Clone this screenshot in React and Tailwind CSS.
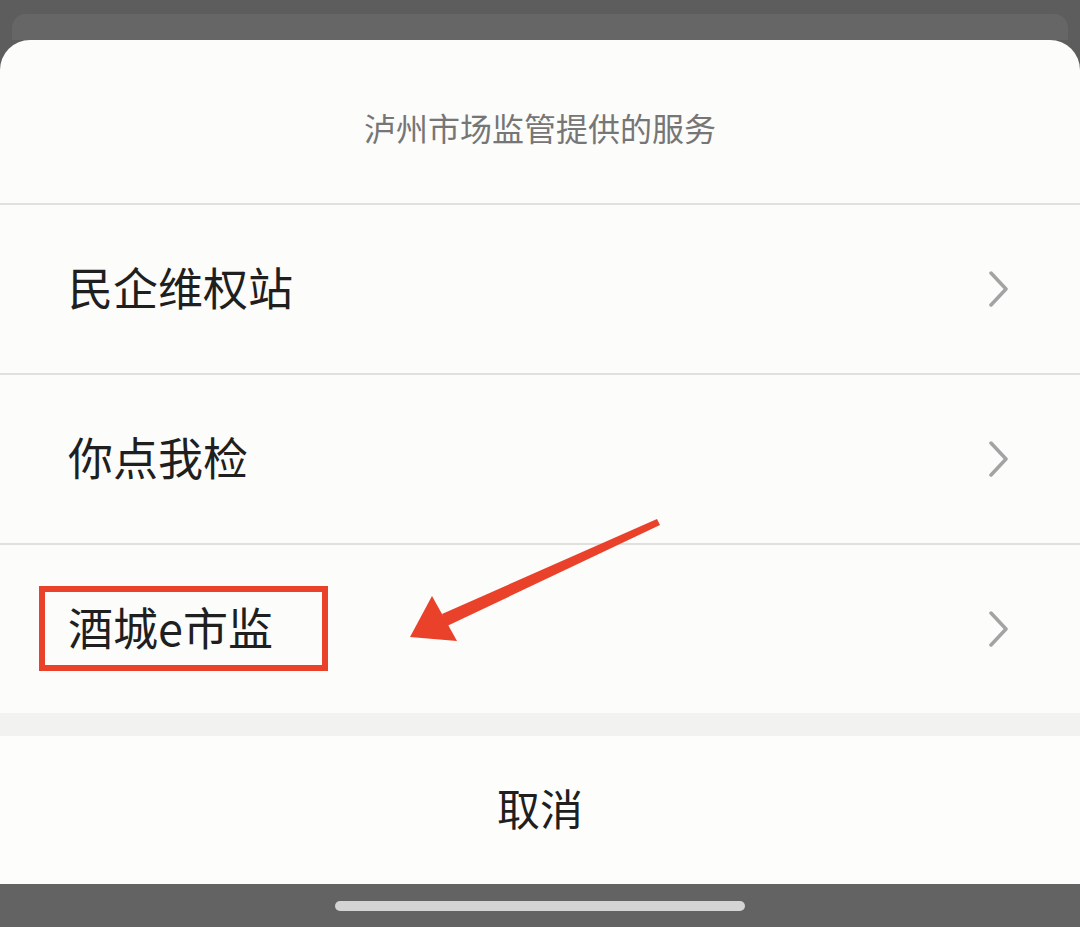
import React from "react";

const font = { fontFamily: '"Noto Sans CJK SC", "Noto Sans", sans-serif' };

function Chevron() {
  return (
    <svg width="22" height="36" viewBox="0 0 22 36" className="shrink-0">
      <polyline points="3,2 18,18 3,34" fill="none" stroke="#a3a3a3" strokeWidth="3.5" strokeLinecap="round" strokeLinejoin="round" />
    </svg>
  );
}

function Row({ label }) {
  return (
    <div className="h-[168px] flex items-center justify-between pl-[68px] pr-[70px]">
      <span className="text-[45px] leading-none text-[#1f1f1f] pb-[5px]">{label}</span>
      <Chevron />
    </div>
  );
}

export default function App() {
  return (
    <div className="w-[1080px] h-[927px] bg-[#5d5d5d] flex flex-col relative overflow-hidden" style={font}>
      <div className="h-[40px] px-[12px] pt-[14px] shrink-0">
        <div className="h-full bg-[#666666] rounded-t-[14px]" />
      </div>
      <div className="bg-[#fcfcfa] rounded-t-[30px] flex flex-col flex-1">
        <div className="h-[163px] pt-[10px] flex items-center justify-center">
          <span className="text-[32px] leading-none text-[#767676]">泸州市场监管提供的服务</span>
        </div>
        <div className="h-[2px] bg-[#e0e0de]" />
        <Row label="民企维权站" />
        <div className="h-[2px] bg-[#e0e0de]" />
        <Row label="你点我检" />
        <div className="h-[2px] bg-[#e0e0de]" />
        <Row label="酒城e市监" />
        <div className="h-[23px] bg-[#f2f2f0]" />
        <div className="h-[148px] flex items-center justify-center bg-[#fdfdfc]">
          <span className="text-[43px] leading-none text-[#1f1f1f] pb-[5px]">取消</span>
        </div>
      </div>
      <div className="h-[43px] bg-[#636363] flex items-center justify-center shrink-0">
        <div className="w-[410px] h-[10px] rounded-full bg-[#d4d4d4]" />
      </div>

      {/* annotation overlay */}
      <div className="absolute left-[39px] top-[586px] w-[289px] h-[85px] border-[6px] border-[#e9412a]" />
      <svg className="absolute left-0 top-0 pointer-events-none" width="1080" height="927">
        <polygon points="657,519 660,525 447,626 442,614" fill="#e9412a" />
        <polygon points="410,637 432,596 457,641" fill="#e9412a" />
      </svg>
    </div>
  );
}
